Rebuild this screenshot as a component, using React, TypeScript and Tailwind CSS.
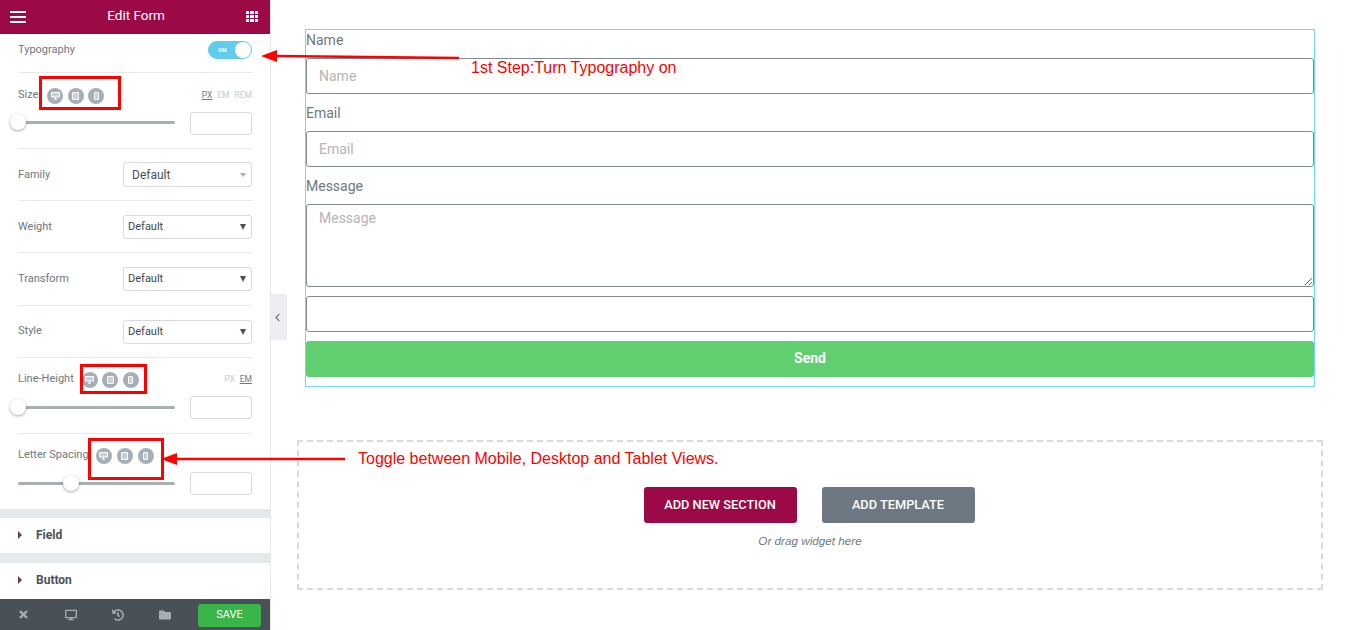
import { FaDesktop, FaHistory, FaFolder } from "react-icons/fa";

const DeviceIcons = ({ className = "" }: { className?: string }) => (
  <div className={`flex items-center ${className}`}>
    {/* desktop */}
    <span className="w-4 h-4 rounded-full bg-[#a4afb7] flex items-center justify-center">
      <svg width="9" height="8" viewBox="0 0 9 8" fill="none" stroke="white">
        <path d="M0.5 0.5h8v4.5h-8z" fill="#c9d0d6" />
        <path d="M4.5 5v2M3 7.2h3" />
      </svg>
    </span>
    {/* tablet */}
    <span className="w-4 h-4 rounded-full bg-[#a4afb7] flex items-center justify-center">
      <span className="w-[7px] h-2 border border-white rounded-[1px] bg-[#c9d0d6]" />
    </span>
    {/* mobile */}
    <span className="w-4 h-4 rounded-full bg-[#a4afb7] flex items-center justify-center">
      <span className="w-[5px] h-2 border border-white rounded-[1px] bg-[#c9d0d6]" />
    </span>
  </div>
);

const Slider = ({ left = 0, trackClass = "" }: { left?: number; trackClass?: string }) => (
  <div className="flex items-center justify-between">
    <div className={`relative w-[157px] h-[3px] rounded-full bg-[#a4afb7] ${trackClass}`}>
      <span
        className="absolute top-[-7px] w-4 h-4 rounded-full bg-white shadow-[0_1px_3px_rgba(0,0,0,0.35)]"
        style={{ left: left - 8 }}
      />
    </div>
    <div className="w-[62px] h-[23px] border border-[#d5dadf] rounded-[3px] bg-white" />
  </div>
);

const SliderRow = ({
  label,
  units,
  active,
  className,
  iconsClass,
  trackClass,
}: {
  label: string;
  units: string[];
  active: string;
  className: string;
  iconsClass: string;
  trackClass?: string;
}) => (
  <div className={`h-[76px] mx-[18px] border-b border-[#e6e9ec] flex flex-col ${className}`}>
    <div className="flex items-center h-[38px] pt-[5px] shrink-0">
      <span className="text-[11px] text-[#6d7882] whitespace-nowrap">{label}</span>
      <DeviceIcons className={iconsClass} />
      <div className="ml-auto flex gap-[5px] text-[8.5px] -mt-[1px]">
        {units.map((u) => (
          <span
            key={u}
            className={u === active ? "text-[#6d7882] underline" : "text-[#c2cbd2]"}
          >
            {u}
          </span>
        ))}
      </div>
    </div>
    <Slider trackClass={trackClass} />
  </div>
);

const SelectRow = ({
  label,
  height,
  family,
  labelClass = "",
  boxClass = "",
}: {
  label: string;
  height: string;
  family?: boolean;
  labelClass?: string;
  boxClass?: string;
}) => (
  <div className={`${height} mx-[18px] border-b border-[#e6e9ec] flex items-center justify-between`}>
    <span className={`text-[11px] text-[#6d7882] ${labelClass}`}>{label}</span>
    <div
      className={`w-[129px] border border-[#d5dadf] rounded-[3px] flex items-center justify-between bg-white ${boxClass} ${
        family ? "h-[25px] pl-2 pr-[5px]" : "h-[24px] pl-1 pr-[5px]"
      }`}
    >
      <span className={family ? "text-[12px] text-[#495157]" : "text-[11px] text-[#3f474d] mt-[1px]"}>
        Default
      </span>
      {family ? (
        <span className="w-0 h-0 border-x-[3px] border-x-transparent border-t-[4px] border-t-[#a4afb7]" />
      ) : (
        <span className="w-0 h-0 border-x-[3px] border-x-transparent border-t-[6px] border-t-[#495157]" />
      )}
    </div>
  </div>
);

const Accordion = ({ label, height }: { label: string; height: string }) => (
  <div className={`${height} px-[18px] pb-[2px] flex items-center gap-[14px]`}>
    <span className="w-0 h-0 border-y-[4px] border-y-transparent border-l-[4px] border-l-[#6d3a4f]" />
    <span className="text-[12px] font-bold text-[#495157]">{label}</span>
  </div>
);

const Sidebar = () => (
  <aside className="w-[271px] h-[630px] shrink-0 border-r border-[#e6e9ec] flex flex-col bg-white font-['Roboto',sans-serif]">
    <header className="h-[34px] bg-[#9b0a46] flex items-center justify-between pl-[10px] pr-[12px] text-white">
      <div className="flex flex-col gap-[3px]">
        <span className="block w-4 h-[2px] bg-white" />
        <span className="block w-4 h-[2px] bg-white" />
        <span className="block w-4 h-[2px] bg-white" />
      </div>
      <span className="text-[13.5px] font-normal -mt-[4px]">Edit Form</span>
      <div className="grid grid-cols-3 gap-[1px] -mt-[1px]">
        {Array.from({ length: 9 }).map((_, i) => (
          <span key={i} className="w-[3.3px] h-[3.3px] bg-white" />
        ))}
      </div>
    </header>

    <div className="h-[39px] mx-[18px] border-b border-[#e6e9ec] flex items-center justify-between">
      <span className="text-[11px] text-[#6d7882] -mt-[6px]">Typography</span>
      <div className="w-11 h-[18px] -mt-[7px] rounded-full bg-[#61ccec] flex items-center justify-end relative border border-[#61ccec]">
        <span className="absolute left-[9px] top-[4px] text-[6px] leading-[8px] font-bold text-white">ON</span>
        <span className="w-4 h-4 rounded-full bg-white" />
      </div>
    </div>

    <SliderRow
      label="Size"
      units={["PX", "EM", "REM"]}
      active="PX"
      className="pt-[1px]"
      iconsClass="ml-[9px] gap-[4.5px]"
      trackClass="-translate-y-[1px]"
    />
    <SelectRow label="Family" height="h-[52px]" family labelClass="mt-[1px]" />
    <SelectRow label="Weight" height="h-[52px]" labelClass="mt-[1px]" boxClass="mt-[1px]" />
    <SelectRow label="Transform" height="h-[53px]" />
    <SelectRow label="Style" height="h-[52px]" />
    <SliderRow
      label="Line-Height"
      units={["PX", "EM"]}
      active="EM"
      className=""
      iconsClass="ml-[8px] gap-[4.5px]"
    />
    <div className="h-[75px] mx-[18px] flex flex-col">
      <div className="flex items-center h-[38px] pt-[5px] shrink-0">
        <span className="text-[11px] text-[#6d7882] whitespace-nowrap">Letter Spacing</span>
        <DeviceIcons className="ml-[7px] gap-[5px]" />
      </div>
      <Slider left={53} />
    </div>

    <div className="h-[9px] bg-[#e6e9ec]" />
    <Accordion label="Field" height="h-[35px]" />
    <div className="h-[10px] bg-[#e6e9ec]" />
    <Accordion label="Button" height="h-[36px]" />

    <footer className="flex-1 bg-[#495157] flex items-center pl-[19px] pr-[9px] text-[#a4afb7]">
      <svg width="9" height="9" viewBox="0 0 9 9" stroke="currentColor" strokeWidth="2.4">
        <path d="M1 1 L8 8 M8 1 L1 8" />
      </svg>
      <FaDesktop className="w-3 h-3 ml-[37px]" />
      <FaHistory className="w-3 h-3 ml-[35px]" />
      <FaFolder className="w-3 h-3 ml-[35px]" />
      <button className="ml-auto w-[63px] h-[23px] mt-[2px] rounded-[3px] bg-[#39b54a] text-white text-[11px] font-normal">
        SAVE
      </button>
    </footer>
  </aside>
);

const fieldClass =
  "block w-full h-9 border border-[#818a91] rounded-[3px] px-3 text-[14px] text-[#6d7882] placeholder:text-[#b5b5b5] outline-none";

const ContactForm = () => (
  <div className="w-[1010px] h-[358px] border border-[#71d7f7] font-['Roboto',sans-serif]">
    <label className="block h-[28px] pt-[2px] text-[14px] leading-[17px] text-[#6d7882]">Name</label>
    <input className={fieldClass} placeholder="Name" />
    <label className="block h-[37px] pt-[11px] text-[14px] leading-[17px] text-[#6d7882]">Email</label>
    <input className={fieldClass} placeholder="Email" />
    <label className="block h-[37px] pt-[11px] text-[14px] leading-[17px] text-[#6d7882]">Message</label>
    <textarea
      className="block w-full h-[83px] border border-[#818a91] rounded-[3px] px-3 py-[3px] text-[14px] text-[#6d7882] placeholder:text-[#b5b5b5] outline-none"
      placeholder="Message"
    />
    <input className={`${fieldClass} mt-[9px]`} />
    <button className="block w-full h-9 pb-[2px] mt-[9px] rounded-[3px] bg-[#61ce70] text-white text-[14px] font-bold">
      Send
    </button>
  </div>
);

const AddSection = () => (
  <div className="w-[1026px] h-[150px] ml-[-8px] mt-[53px] border-2 border-dashed border-[#d5dadf] flex flex-col items-center pt-[45px] font-['Liberation_Sans',sans-serif]">
    <div className="flex gap-[25px] -ml-[2px]">
      <button className="w-[153px] h-9 rounded-[3px] bg-[#9b0a46] text-white text-[12.8px] font-medium font-['Roboto',sans-serif]">
        ADD NEW SECTION
      </button>
      <button className="w-[153px] h-9 rounded-[3px] bg-[#6d7882] text-white text-[12.8px] font-medium font-['Roboto',sans-serif]">
        ADD TEMPLATE
      </button>
    </div>
    <p className="mt-[9px] text-[11.7px] italic text-[#6d7882]">Or drag widget here</p>
  </div>
);

// red markup drawn on top of the screenshot
const Annotations = () => (
  <>
    <div className="absolute left-[39px] top-[76px] w-[82px] h-[34px] border-[3px] border-[#fe0000]" />
    <div className="absolute left-[80px] top-[364px] w-[67px] h-[30px] border-[3px] border-[#fe0000]" />
    <div className="absolute left-[88px] top-[438px] w-[76px] h-[42px] border-[3px] border-[#fe0000]" />
    <svg className="absolute left-0 top-0 pointer-events-none" width="1345" height="630">
      <path d="M275 56 L459 58" stroke="#fe0000" strokeWidth="2.5" fill="none" />
      <path d="M261 56 L277 50 L277 62 Z" fill="#fe0000" />
      <path d="M175 459 L345 459" stroke="#fe0000" strokeWidth="2.5" fill="none" />
      <path d="M161 459 L177 453 L177 465 Z" fill="#fe0000" />
    </svg>
    <span className="absolute left-[471px] top-[59px] text-[16px] leading-[18px] text-[#fe0000] font-['Liberation_Sans',sans-serif] whitespace-nowrap">
      1st Step:Turn Typography on
    </span>
    <span className="absolute left-[358px] top-[450px] text-[16px] leading-[18px] text-[#fe0000] font-['Liberation_Sans',sans-serif] whitespace-nowrap">
      Toggle between Mobile, Desktop and Tablet Views.
    </span>
  </>
);

export default function App() {
  return (
    <div className="relative w-[1345px] h-[630px] overflow-hidden bg-white flex">
      <Sidebar />
      <main className="flex-1 pl-[34px] pt-[29px]">
        <ContactForm />
        <AddSection />
      </main>
      <div className="absolute left-[271px] top-[294px] w-[16px] h-[46px] bg-[#eceef1] flex items-center pl-[4px] rounded-r-[3px]">
        <svg width="5" height="9" viewBox="0 0 5 9" fill="none" stroke="#6d7882" strokeWidth="1.2">
          <path d="M4.3 0.8 L1 4.5 L4.3 8.2" />
        </svg>
      </div>
      <Annotations />
    </div>
  );
}
